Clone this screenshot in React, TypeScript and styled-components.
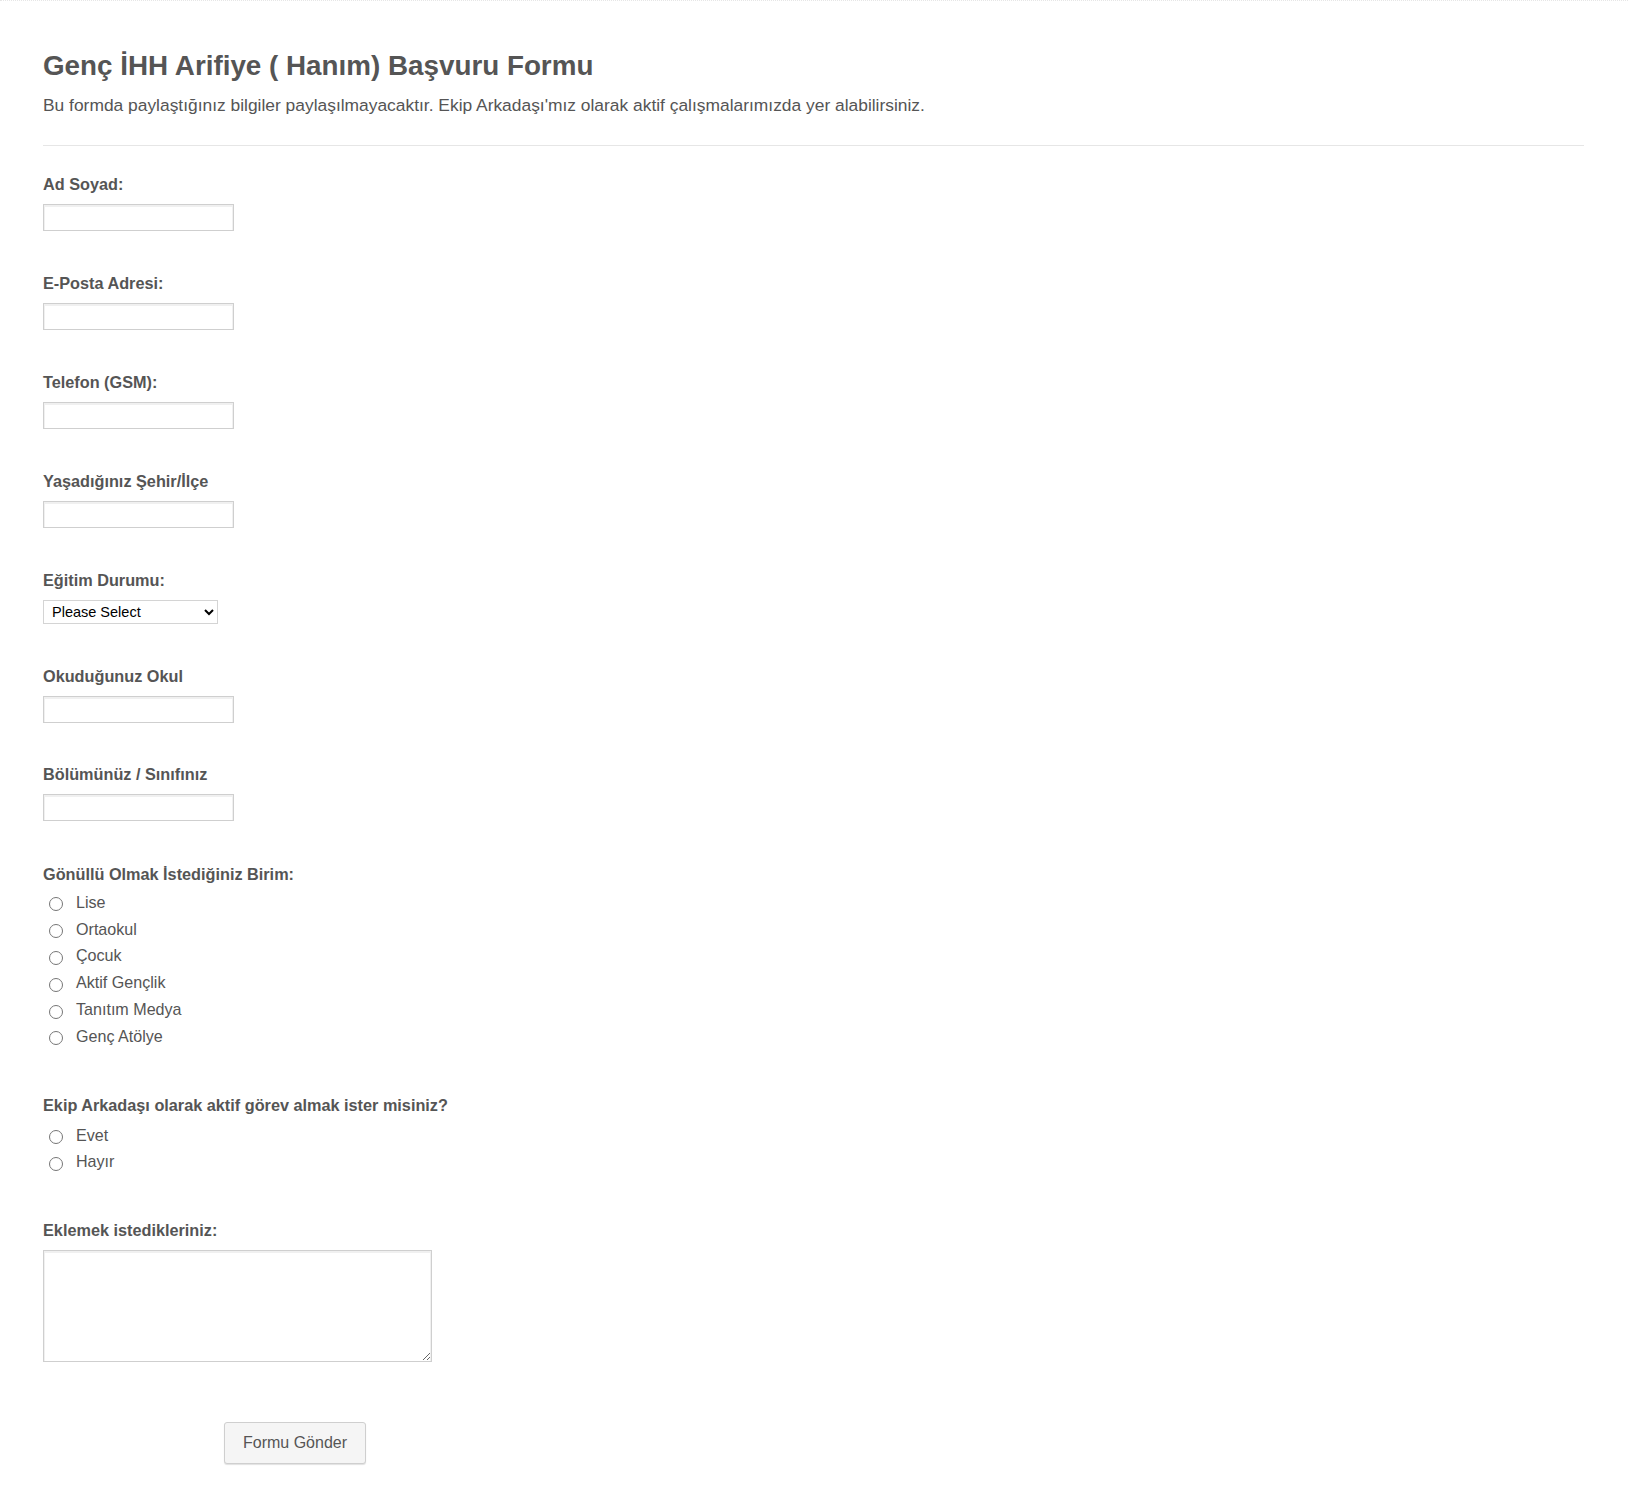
import styled, { createGlobalStyle } from "styled-components";

const GlobalStyle = createGlobalStyle`
  html, body {
    margin: 0;
    padding: 0;
    background: #fff;
  }
  body {
    font-family: "Liberation Sans", Arial, sans-serif;
    color: #555;
  }
`;

// Page frame
const Page = styled.div`
  min-height: 1507px;
  box-sizing: border-box;
  border-top: 1px dotted #e6e6e6;
  padding: 48px 44px 44px 43px;
`;

const Header = styled.header`
  padding-bottom: 30px;
  border-bottom: 1px solid #e6e6e6;
  margin-bottom: 28px;
`;

const Title = styled.h1`
  margin: 0 0 12px;
  font-size: 27.8px;
  line-height: 34px;
  font-weight: 700;
  color: #555;
`;

const Description = styled.p`
  margin: 0;
  font-size: 17.4px;
  line-height: 20px;
  color: #555;
`;

const Form = styled.form`
  display: flex;
  flex-direction: column;
`;

const Field = styled.div<{ $gap?: number }>`
  display: flex;
  flex-direction: column;
  align-items: flex-start;
  margin-bottom: ${(p) => p.$gap ?? 42}px;
`;

const Label = styled.label`
  font-size: 16.25px;
  line-height: 20px;
  font-weight: 700;
  color: #555;
  margin-bottom: 10px;
`;

const GroupLabel = styled(Label)<{ $space?: number }>`
  margin-bottom: ${(p) => p.$space ?? 5}px;
`;

const TextInput = styled.input`
  box-sizing: border-box;
  width: 191px;
  height: 27px;
  margin: 0;
  border: 1px solid #cfcfcf;
  box-shadow: inset 0 1px 0 1px #f0f0f0;
  background: #fff;
  font-family: inherit;
  font-size: 14px;
  padding: 2px 4px;
  outline: none;
`;

const Select = styled.select`
  box-sizing: border-box;
  width: 175px;
  height: 24px;
  margin: 0;
  border: 1px solid #d4d4d4;
  border-radius: 0;
  background: #fff;
  color: #000;
  font-family: "Liberation Sans", Arial, sans-serif;
  font-size: 14.5px;
  padding: 0 2px 0 4px;
`;

const RadioList = styled.div`
  display: flex;
  flex-direction: column;
`;

const RadioRow = styled.label`
  display: flex;
  align-items: center;
  height: 26.8px;
  font-size: 16.1px;
  color: #555;
  cursor: pointer;
`;

const Radio = styled.input`
  width: 14px;
  height: 14px;
  margin: 4px 13px 0 6px;
  accent-color: #555;
`;

const TextArea = styled.textarea`
  box-sizing: border-box;
  width: 389px;
  height: 112px;
  margin: 0;
  border: 1px solid #cfcfcf;
  box-shadow: inset 0 1px 0 1px #f0f0f0;
  font-family: inherit;
  font-size: 14px;
  padding: 4px;
  outline: none;
`;

const ButtonRow = styled.div`
  padding: 18px 0 0 181px;
`;

const SubmitButton = styled.button`
  box-sizing: border-box;
  width: 142px;
  height: 42px;
  border: 1px solid #cfcfcf;
  border-radius: 3px;
  background: #f5f5f5;
  box-shadow: 0 1px 1px rgba(0, 0, 0, 0.12);
  font-family: "Liberation Sans", Arial, sans-serif;
  font-size: 16px;
  color: #555;
  cursor: pointer;
`;

const textFields = [
  "Ad Soyad:",
  "E-Posta Adresi:",
  "Telefon (GSM):",
  "Yaşadığınız Şehir/İlçe",
];

const units = ["Lise", "Ortaokul", "Çocuk", "Aktif Gençlik", "Tanıtım Medya", "Genç Atölye"];

export default function App() {
  return (
    <>
      <GlobalStyle />
      <Page>
        <Header>
          <Title>Genç İHH Arifiye ( Hanım) Başvuru Formu</Title>
          <Description>
            Bu formda paylaştığınız bilgiler paylaşılmayacaktır. Ekip Arkadaşı'mız olarak aktif
            çalışmalarımızda yer alabilirsiniz.
          </Description>
        </Header>
        <Form onSubmit={(e) => e.preventDefault()}>
          {textFields.map((label) => (
            <Field key={label}>
              <Label>{label}</Label>
              <TextInput type="text" />
            </Field>
          ))}

          <Field $gap={42}>
            <Label>Eğitim Durumu:</Label>
            <Select defaultValue="">
              <option value="">Please Select</option>
              <option>İlkokul</option>
              <option>Ortaokul</option>
              <option>Lise</option>
              <option>Üniversite</option>
            </Select>
          </Field>

          <Field $gap={41}>
            <Label>Okuduğunuz Okul</Label>
            <TextInput type="text" />
          </Field>

          <Field $gap={43}>
            <Label>Bölümünüz / Sınıfınız</Label>
            <TextInput type="text" />
          </Field>

          <Field $gap={45}>
            <GroupLabel>Gönüllü Olmak İstediğiniz Birim:</GroupLabel>
            <RadioList>
              {units.map((u) => (
                <RadioRow key={u}>
                  <Radio type="radio" name="birim" />
                  {u}
                </RadioRow>
              ))}
            </RadioList>
          </Field>

          <Field $gap={45}>
            <GroupLabel $space={7}>Ekip Arkadaşı olarak aktif görev almak ister misiniz?</GroupLabel>
            <RadioList>
              {["Evet", "Hayır"].map((u) => (
                <RadioRow key={u}>
                  <Radio type="radio" name="ekip" />
                  {u}
                </RadioRow>
              ))}
            </RadioList>
          </Field>

          <Field $gap={42}>
            <Label>Eklemek istedikleriniz:</Label>
            <TextArea />
          </Field>

          <ButtonRow>
            <SubmitButton type="submit">Formu Gönder</SubmitButton>
          </ButtonRow>
        </Form>
      </Page>
    </>
  );
}
